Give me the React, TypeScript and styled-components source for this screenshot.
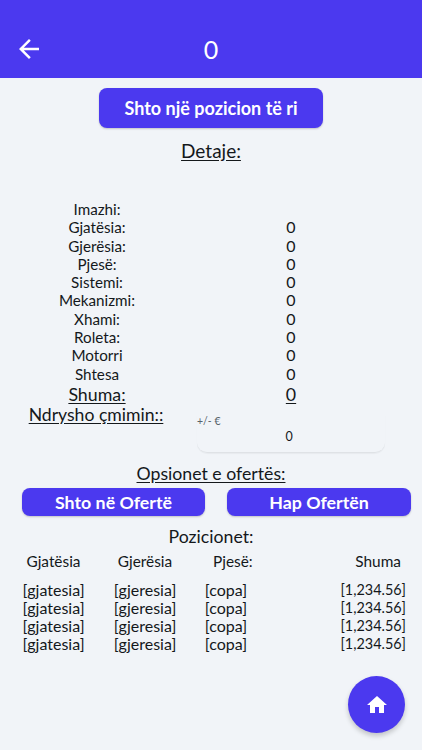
import styled, { createGlobalStyle } from 'styled-components';
import { Fragment } from 'react';
import { MdArrowBack, MdHome } from 'react-icons/md';

const GlobalStyle = createGlobalStyle`
  html, body {
    margin: 0;
    padding: 0;
    background: #f1f4f8;
  }
  * {
    box-sizing: border-box;
  }
`;

const Page = styled.div`
  position: relative;
  width: 422px;
  height: 750px;
  overflow: hidden;
  background: #f1f4f8;
  color: #14181b;
  font-family: Lato, 'Open Sans', sans-serif;
  font-size: 16px;
`;

const Header = styled.header`
  display: flex;
  align-items: center;
  height: 78px;
  padding: 19px 14px 0 14px;
  background: #4b39ef;
  color: #fff;
`;

const BackIcon = styled(MdArrowBack)`
  width: 30px;
  height: 30px;
  flex: none;
`;

const HeaderTitle = styled.h1`
  flex: 1;
  margin: 0 30px 0 0;
  text-align: center;
  font-size: 25px;
  font-weight: 400;
  line-height: 28px;
`;

const Content = styled.main`
  display: flex;
  flex-direction: column;
  align-items: center;
`;

const AddButton = styled.button`
  width: 224px;
  height: 40px;
  margin-top: 10px;
  padding: 0;
  border: none;
  border-radius: 8px;
  background: #4b39ef;
  color: #fff;
  font: 700 18px Lato, sans-serif;
  box-shadow: 0 1px 2px rgba(0, 0, 0, 0.2);
`;

const SectionTitle = styled.div<{ $underline?: boolean }>`
  font-size: 17.7px;
  line-height: 22px;
  text-decoration: ${(p) => (p.$underline ? 'underline' : 'none')};
  text-underline-offset: 2px;
`;

const DetailsTitle = styled(SectionTitle)`
  margin-top: 12px;
  font-size: 19px;
`;

const Details = styled.section`
  display: grid;
  grid-template-columns: 192px 188px;
  grid-auto-rows: 18.3px;
  width: 422px;
  margin-top: 38px;
  line-height: 18px;
  text-align: center;
`;

const Label = styled.div`
  padding-left: 2px;
  font-size: 15.2px;
`;

const Value = styled.div`
  padding-left: 10px;
`;

const TotalLabel = styled.div`
  margin-top: 2px;
  padding-left: 2px;
  font-size: 17.8px;
  text-decoration: underline;
  text-underline-offset: 2px;
`;

const TotalValue = styled(TotalLabel)`
  padding-left: 10px;
`;

const PriceRow = styled.div`
  display: grid;
  grid-template-columns: 192px 193px;
  width: 422px;
`;

const PriceLabel = styled.div`
  margin-top: 3px;
  font-size: 17.6px;
  line-height: 22px;
  text-align: center;
  text-decoration: underline;
  text-underline-offset: 2px;
`;

const PriceField = styled.div`
  height: 39px;
  margin: 13px 0 0 5px;
  border-radius: 0 0 10px 10px;
  border-bottom: 1px solid #dfe2e6;
  box-shadow: 0 1px 1px rgba(0, 0, 0, 0.04);
`;

const PriceHint = styled.div`
  font-size: 10.5px;
  line-height: 14px;
  color: #57636c;
`;

const PriceInput = styled.div`
  margin-top: 1px;
  padding-right: 4px;
  font-size: 12.5px;
  line-height: 16px;
  text-align: center;
`;

const OptionsTitle = styled(SectionTitle)`
  margin-top: 10px;
`;

const OfferButtons = styled.div`
  display: grid;
  grid-template-columns: 183px 184px;
  gap: 22px;
  width: 422px;
  margin-top: 3px;
  padding-left: 22px;
`;

const OfferButton = styled.button`
  height: 28px;
  padding: 0;
  border: none;
  border-radius: 8px;
  background: #4b39ef;
  color: #fff;
  font: 700 17.8px Lato, sans-serif;
  box-shadow: 0 1px 2px rgba(0, 0, 0, 0.2);
`;

const PositionsTitle = styled(SectionTitle)`
  margin-top: 10px;
`;

const Table = styled.div`
  display: grid;
  grid-template-columns: 22px 63px 28px 64px 27px 44px 1fr 16px;
  width: 422px;
  margin-top: 4px;
`;

const TableRow = styled.div<{ $head?: boolean }>`
  display: grid;
  grid-column: 1 / -1;
  grid-template-columns: subgrid;
  height: 18.3px;
  margin-bottom: ${(p) => (p.$head ? '10px' : '0')};
  line-height: 18px;
`;

const Cell = styled.div<{ $col: number; $align?: string }>`
  grid-column: ${(p) => p.$col};
  white-space: nowrap;
  text-align: ${(p) => p.$align ?? 'center'};
`;

const HeadCell = styled(Cell)`
  font-size: 15.4px;
`;

const PieceHead = styled(HeadCell)`
  padding-left: 9px;
`;

const TotalHead = styled(HeadCell)`
  padding-right: 5px;
`;

const AmountCell = styled(Cell)`
  font-size: 14.4px;
`;

const HomeButton = styled.button`
  position: absolute;
  right: 17px;
  bottom: 17px;
  display: flex;
  align-items: center;
  justify-content: center;
  width: 57px;
  height: 57px;
  padding: 0;
  border: none;
  border-radius: 50%;
  background: #4b39ef;
  color: #fff;
  box-shadow: 0 3px 5px rgba(0, 0, 0, 0.2);
`;

const HomeIcon = styled(MdHome)`
  width: 24px;
  height: 24px;
`;

const specs = ['Imazhi:', 'Gjatësia:', 'Gjerësia:', 'Pjesë:', 'Sistemi:', 'Mekanizmi:', 'Xhami:', 'Roleta:', 'Motorri', 'Shtesa'];
const positions = [0, 1, 2, 3];

export default function App() {
  return (
    <Page>
      <GlobalStyle />
      <Header>
        <BackIcon />
        <HeaderTitle>0</HeaderTitle>
      </Header>
      <Content>
        <AddButton>Shto një pozicion të ri</AddButton>
        <DetailsTitle $underline>Detaje:</DetailsTitle>
        <Details>
          {specs.map((label, i) => (
            <Fragment key={label}>
              <Label>{label}</Label>
              <Value>{i === 0 ? '' : '0'}</Value>
            </Fragment>
          ))}
          <TotalLabel>Shuma:</TotalLabel>
          <TotalValue>0</TotalValue>
        </Details>
        <PriceRow>
          <PriceLabel>Ndrysho çmimin::</PriceLabel>
          <PriceField>
            <PriceHint>+/- €</PriceHint>
            <PriceInput>0</PriceInput>
          </PriceField>
        </PriceRow>
        <OptionsTitle $underline>Opsionet e ofertës:</OptionsTitle>
        <OfferButtons>
          <OfferButton>Shto në Ofertë</OfferButton>
          <OfferButton>Hap Ofertën</OfferButton>
        </OfferButtons>
        <PositionsTitle>Pozicionet:</PositionsTitle>
        <Table>
          <TableRow $head>
            <HeadCell $col={2}>Gjatësia</HeadCell>
            <HeadCell $col={4}>Gjerësia</HeadCell>
            <PieceHead $col={6}>Pjesë:</PieceHead>
            <TotalHead $col={7} $align="right">Shuma</TotalHead>
          </TableRow>
          {positions.map((row) => (
            <TableRow key={row}>
              <Cell $col={2}>[gjatesia]</Cell>
              <Cell $col={4}>[gjeresia]</Cell>
              <Cell $col={6}>[copa]</Cell>
              <AmountCell $col={7} $align="right">[1,234.56]</AmountCell>
            </TableRow>
          ))}
        </Table>
      </Content>
      <HomeButton>
        <HomeIcon />
      </HomeButton>
    </Page>
  );
}
